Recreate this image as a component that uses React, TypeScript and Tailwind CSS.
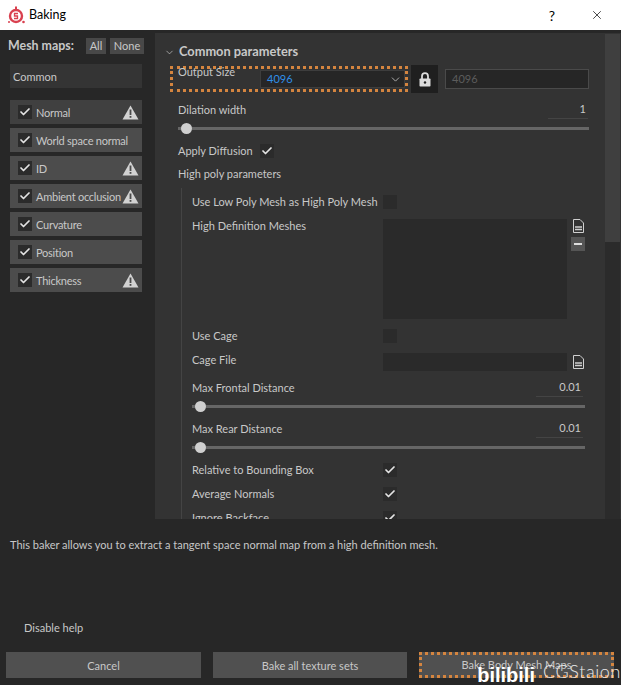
import { Check, ChevronDown, X } from "lucide-react";

function Warn() {
  return (
    <svg width="17" height="15" viewBox="0 0 17 15" className="shrink-0">
      <path d="M8.5 0.5 L16.5 14.5 H0.5 Z" fill="#d2d2d2" />
      <rect x="7.6" y="4.5" width="1.8" height="5.5" fill="#4a4a4a" />
      <rect x="7.6" y="11" width="1.8" height="1.8" fill="#4a4a4a" />
    </svg>
  );
}

function Box({ on = true }: { on?: boolean }) {
  return (
    <span className="w-[14px] h-[14px] bg-[#2b2b2b] flex items-center justify-center shrink-0">
      {on && <Check size={12} strokeWidth={3.5} className="text-[#e4e4e4]" />}
    </span>
  );
}

function FileIcon() {
  return (
    <svg width="11" height="14" viewBox="0 0 11 14" fill="none" stroke="#d0d0d0">
      <path d="M0.5 0.5 H7 L10.5 4 V13.5 H0.5 Z" />
      <path d="M2 8 H9 M2 10.5 H9" strokeWidth="1.3" />
    </svg>
  );
}

function LockIcon() {
  return (
    <svg width="12" height="15" viewBox="0 0 12 15">
      <path d="M3 7 V4.2 A3 3 0 0 1 9 4.2 V7" fill="none" stroke="#dcdcdc" strokeWidth="1.8" />
      <rect x="0.5" y="6.5" width="11" height="8" rx="0.8" fill="#dcdcdc" />
      <circle cx="6" cy="10.5" r="1.2" fill="#1f1f1f" />
    </svg>
  );
}

function Slider({ width }: { width: string }) {
  return (
    <div className={`relative h-[3px] bg-[#666666] ${width}`}>
      <span className="absolute left-[3px] -top-[4px] w-[11px] h-[11px] rounded-full bg-[#cfcfcf]" />
    </div>
  );
}

function MapRow({ label, warn, active }: { label: string; warn?: boolean; active?: boolean }) {
  return (
    <div className={`h-6 w-[132px] flex items-center pl-2 pr-[3px] gap-1 ${active ? "bg-[#404040]" : "bg-[#4c4c4c]"}`}>
      <Box />
      <span className="flex-1 min-w-0 whitespace-nowrap pt-[2px] tracking-[-0.25px] text-[#c8c8c8]">{label}</span>
      {warn && <Warn />}
    </div>
  );
}

function Distance({ label, value }: { label: string; value: string }) {
  return (
    <div className="flex flex-col">
      <div className="flex items-center justify-between h-5 w-[391px]">
        <span>{label}</span>
        <span className="w-[47px] text-right border-b border-[#444] pr-[2px]">{value}</span>
      </div>
      <div className="h-4 flex items-center">
        <Slider width="w-[393px]" />
      </div>
    </div>
  );
}

export default function App() {
  const maps = [
    { label: "Normal", warn: true, active: true },
    { label: "World space normal" },
    { label: "ID", warn: true },
    { label: "Ambient occlusion", warn: true },
    { label: "Curvature" },
    { label: "Position" },
    { label: "Thickness", warn: true },
  ];

  return (
    <div className="w-[621px] h-[685px] flex flex-col bg-[#272727] overflow-hidden text-[11px] text-[#c8c8c8] font-['Lato',sans-serif]">
      {/* title bar */}
      <div className="h-[30px] shrink-0 bg-white flex items-center pl-2 pr-[17px] text-black">
        <svg width="17" height="18" viewBox="0 0 17 18" fill="none" className="shrink-0">
          <circle cx="8" cy="10" r="6" stroke="#d9404f" strokeWidth="2.4" />
          <path d="M8 0.5 V3.5" stroke="#d9404f" strokeWidth="2" />
          <path d="M10 7.5 H6.5 V10 H9.5 V12.5 H6" stroke="#d9404f" strokeWidth="1.3" />
          <circle cx="15.5" cy="16" r="1.3" fill="#d9404f" />
          <circle cx="1" cy="16" r="1" fill="#d9404f" />
        </svg>
        <span className="ml-[4px] text-[12.5px]">Baking</span>
        <span className="ml-auto text-[14px] mr-[35px]">?</span>
        <X size={14} strokeWidth={1.2} />
      </div>

      <div className="flex h-[489px] shrink-0">
        {/* mesh maps */}
        <div className="w-[155px] shrink-0 pl-[10px] pt-[8px] flex flex-col">
          <div className="flex items-center -ml-[2px] h-4">
            <span className="font-bold text-[12.4px] text-[#c8c8c8] w-[78px]">Mesh maps:</span>
            <span className="w-5 h-4 bg-[#484848] text-center leading-4 mr-1">All</span>
            <span className="w-[34px] h-4 bg-[#484848] text-center leading-4">None</span>
          </div>
          <div className="h-6 w-[132px] bg-[#343434] mt-[10px] mb-3 flex items-center pl-[3px] pt-[2px]">Common</div>
          <div className="flex flex-col gap-1">
            {maps.map((m) => (
              <MapRow key={m.label} label={m.label} warn={m.warn} active={m.active} />
            ))}
          </div>
        </div>

        {/* parameters */}
        <div className="flex-1 mt-[3px] bg-[#333333] overflow-hidden flex">
          <div className="flex-1 pl-[9px] pt-[11px]">
            <div className="flex items-center gap-[4px] h-4 font-bold text-[#c8c8c8]">
              <ChevronDown size={11} strokeWidth={1.5} />
              <span className="text-[12.8px] whitespace-nowrap">Common parameters</span>
            </div>
            <div className="pl-[14px]">
              <div className="flex items-center h-7 mt-[5px]">
                <div className="w-[238px] h-[26px] -ml-[8px] border-[3px] border-dotted border-[#d5853f] flex pl-[5px]">
                  <span className="w-[82px] -mt-[5px]">Output Size</span>
                  <div className="flex-1 h-[18px] mt-[1px] bg-[#262626] border border-[#3d3d3d] flex items-center justify-between pl-[6px] pr-[2px] text-[#2f8fe8]">
                    4096
                    <ChevronDown size={13} strokeWidth={1.5} className="text-[#c8c8c8]" />
                  </div>
                </div>
                <div className="w-[27px] h-7 ml-[3px] bg-[#1f1f1f] flex items-center justify-center">
                  <LockIcon />
                </div>
                <div className="w-[144px] h-5 ml-[7px] bg-[#262626] border border-[#4a4a4a] flex items-center pl-[6px] text-[#5c5c5c]">4096</div>
              </div>

              <div className="flex items-center justify-between h-5 mt-[7px] w-[410px]">
                <span>Dilation width</span>
                <span className="w-[40px] text-right border-b border-[#444] pr-[2px]">1</span>
              </div>
              <div className="h-4 flex items-center">
                <Slider width="w-[411px]" />
              </div>
              <div className="flex items-center h-5 mt-[5px]">
                <span className="w-[82px]">Apply Diffusion</span>
                <Box />
              </div>
              <div className="h-5 flex items-center mt-[3px]">High poly parameters</div>

              <div className="ml-[3px] pl-[10px] border-l border-[#444444] pt-[6px] mt-[4px]">
                <div className="flex items-center h-4">
                  <span className="w-[191px] whitespace-nowrap">Use Low Poly Mesh as High Poly Mesh</span>
                  <Box on={false} />
                </div>
                <div className="flex mt-[9px]">
                  <span className="w-[191px] -mt-[1px]">High Definition Meshes</span>
                  <div className="w-[184px] h-[100px] bg-[#2a2a2a]" />
                  <div className="flex flex-col items-center w-[14px] ml-[4px] gap-[4px]">
                    <FileIcon />
                    <span className="w-[14px] h-[14px] bg-[#555] flex items-center justify-center">
                      <span className="w-[8px] h-[2px] bg-[#ddd]" />
                    </span>
                  </div>
                </div>
                <div className="flex items-center h-4 mt-[9px]">
                  <span className="w-[191px]">Use Cage</span>
                  <Box on={false} />
                </div>
                <div className="flex items-center h-5 mt-[8px]">
                  <span className="w-[191px] -mt-[3px]">Cage File</span>
                  <div className="w-[184px] h-[18px] bg-[#2a2a2a]" />
                  <span className="ml-[6px] flex"><FileIcon /></span>
                </div>
                <div className="mt-[6px] flex flex-col gap-[5px]">
                  <Distance label="Max Frontal Distance" value="0.01" />
                  <Distance label="Max Rear Distance" value="0.01" />
                </div>
                <div className="flex items-center h-6 mt-[3px]">
                  <span className="w-[191px]">Relative to Bounding Box</span>
                  <Box />
                </div>
                <div className="flex items-center h-6">
                  <span className="w-[191px]">Average Normals</span>
                  <Box />
                </div>
                <div className="flex items-center h-6">
                  <span className="w-[191px]">Ignore Backface</span>
                  <Box />
                </div>
              </div>
            </div>
          </div>
          {/* scrollbar */}
          <div className="w-[15px] shrink-0 bg-[#2b2b2b] mr-[1px] mt-[1px]">
            <div className="h-[208px] bg-[#3f3f3f]" />
          </div>
        </div>
      </div>

      {/* help + actions */}
      <div className="flex-1 flex flex-col px-[6px] relative">
        <p className="mt-[18px] pl-[4px]">This baker allows you to extract a tangent space normal map from a high definition mesh.</p>
        <span className="mt-auto mb-[16px] ml-[18px]">Disable help</span>
        <div className="flex justify-between gap-3 mb-[7px] pr-[1px]">
          <button className="w-[195px] h-[26px] pt-[2px] bg-[#505050] text-[#c8c8c8]">Cancel</button>
          <button className="w-[194px] h-[26px] pt-[2px] bg-[#505050] text-[#c8c8c8]">Bake all texture sets</button>
          <button className="w-[195px] h-[26px] pt-px bg-[#505050] text-[#c8c8c8] border-[3px] border-dotted border-[#d5853f]">Bake Body Mesh Maps</button>
        </div>
        <div className="absolute right-0 bottom-0 flex items-end gap-[8px] text-white pointer-events-none">
          <span className="text-[20px] leading-none font-bold font-['Liberation_Sans',sans-serif]">bilibili</span>
          <span className="text-[18px] leading-none mb-[5px] font-light tracking-[0.6px] text-[#e8e8e8]">CGStaion</span>
        </div>
      </div>
    </div>
  );
}
